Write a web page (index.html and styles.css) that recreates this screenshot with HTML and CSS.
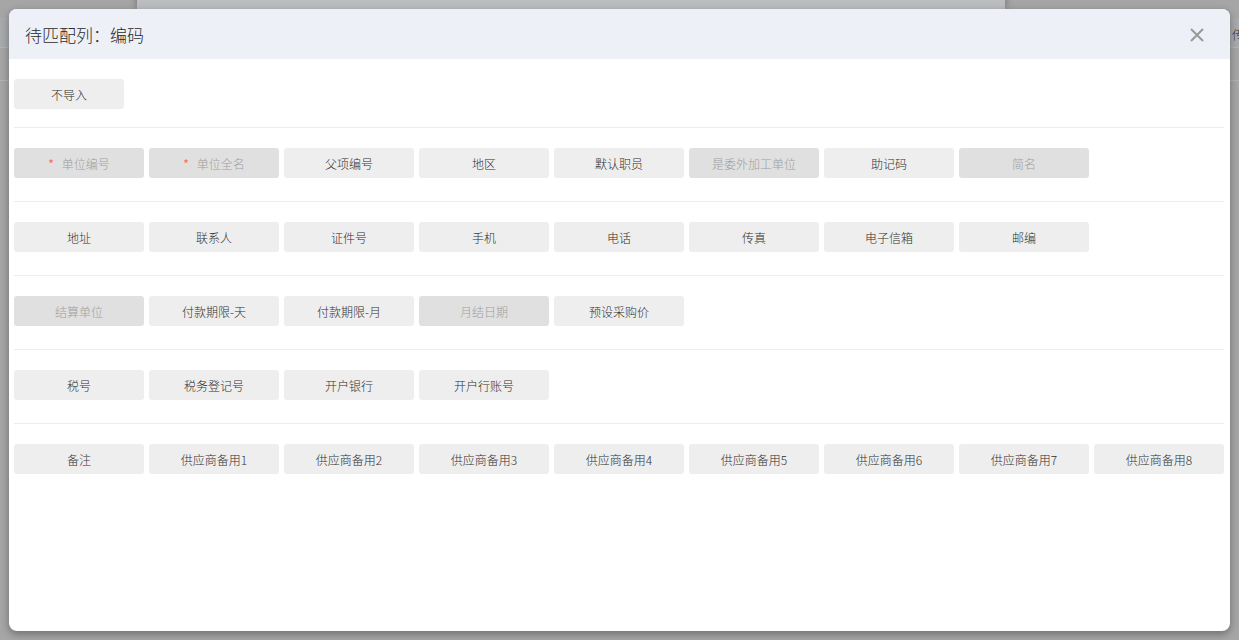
FILE: index.html
```html
<!DOCTYPE html>
<html lang="zh-CN">
<head>
<meta charset="utf-8">
<title>待匹配列：编码</title>
<link rel="stylesheet" href="styles.css">
</head>
<body>
<div class="backdrop">
  <div class="bd-panel"></div>
  <div class="bd-band"></div>
  <div class="bd-line bd-line-1"></div>
  <div class="bd-line bd-line-2"></div>
  <span class="bd-text">传</span>
</div>
<div class="modal">
  <div class="modal-header">
    <span class="modal-title">待匹配列：编码</span>
    <span class="modal-close">
      <svg width="14" height="14" viewBox="0 0 14 14"><path d="M1 1L13 13M13 1L1 13" stroke="#999" stroke-width="2" fill="none"/></svg>
    </span>
  </div>
  <div class="modal-body">
    <div class="group group-first">
      <span class="btn btn-small">不导入</span>
    </div>
    <div class="group">
      <span class="btn btn-disabled"><i class="req">*</i>单位编号</span>
      <span class="btn btn-disabled"><i class="req">*</i>单位全名</span>
      <span class="btn">父项编号</span>
      <span class="btn">地区</span>
      <span class="btn">默认职员</span>
      <span class="btn btn-disabled">是委外加工单位</span>
      <span class="btn">助记码</span>
      <span class="btn btn-disabled">简名</span>
    </div>
    <div class="group">
      <span class="btn">地址</span>
      <span class="btn">联系人</span>
      <span class="btn">证件号</span>
      <span class="btn">手机</span>
      <span class="btn">电话</span>
      <span class="btn">传真</span>
      <span class="btn">电子信箱</span>
      <span class="btn">邮编</span>
    </div>
    <div class="group">
      <span class="btn btn-disabled">结算单位</span>
      <span class="btn">付款期限-天</span>
      <span class="btn">付款期限-月</span>
      <span class="btn btn-disabled">月结日期</span>
      <span class="btn">预设采购价</span>
    </div>
    <div class="group">
      <span class="btn">税号</span>
      <span class="btn">税务登记号</span>
      <span class="btn">开户银行</span>
      <span class="btn">开户行账号</span>
    </div>
    <div class="group group-last">
      <span class="btn">备注</span>
      <span class="btn">供应商备用1</span>
      <span class="btn">供应商备用2</span>
      <span class="btn">供应商备用3</span>
      <span class="btn">供应商备用4</span>
      <span class="btn">供应商备用5</span>
      <span class="btn">供应商备用6</span>
      <span class="btn">供应商备用7</span>
      <span class="btn">供应商备用8</span>
    </div>
  </div>
</div>
</body>
</html>
```

FILE: styles.css
```css
html, body {
  margin: 0;
  padding: 0;
}
body {
  width: 1239px;
  height: 640px;
  overflow: hidden;
  background: #a6a6a6;
  font-family: "Noto Sans CJK SC", "Noto Sans", sans-serif;
  position: relative;
}
.backdrop {
  position: absolute;
  inset: 0;
  z-index: 0;
}
.bd-panel {
  position: absolute;
  left: 137px;
  top: -20px;
  width: 868px;
  height: 29px;
  background: #bcbdc1;
  box-shadow: 0 0 8px rgba(0,0,0,0.35);
}
.bd-band {
  position: absolute;
  left: 0;
  right: 0;
  top: 18px;
  height: 30px;
  background: #a9aaad;
}
.bd-line {
  position: absolute;
  left: 0;
  right: 0;
  height: 1px;
  background: #b4b4b4;
}
.bd-line-1 { top: 47px; }
.bd-line-2 { top: 80px; }
.bd-text {
  position: absolute;
  left: 1232px;
  top: 26px;
  font-size: 12px;
  font-weight: 300;
  color: #333;
}
.modal {
  position: relative;
  z-index: 1;
  margin: 9px 0 0 9px;
  width: 1221px;
  height: 622px;
  background: #fff;
  border-radius: 8px;
  overflow: hidden;
  box-shadow: 0 3px 8px rgba(0,0,0,0.35);
  display: flex;
  flex-direction: column;
}
.modal-header {
  height: 50px;
  flex: none;
  background: #edf0f7;
  display: flex;
  align-items: center;
  justify-content: space-between;
  padding: 0 26px 0 16px;
}
.modal-title {
  font-size: 17px;
  font-weight: 300;
  color: #2b2b2b;
  line-height: 1;
}
.modal-close {
  display: flex;
  width: 14px;
  height: 14px;
  margin-top: 2px;
}
.modal-body {
  padding: 0 6px 0 5px;
}
.group {
  display: flex;
  gap: 5px;
  padding: 20px 0 23px;
  border-bottom: 1px solid #ececec;
}
.group-first {
  padding-bottom: 18px;
}
.group-last {
  border-bottom: none;
}
.btn {
  width: 130px;
  height: 30px;
  flex: none;
  display: flex;
  align-items: center;
  justify-content: center;
  background: #eeeeee;
  border-radius: 3px;
  font-size: 12px;
  font-weight: 300;
  color: #2e2e2e;
}
.btn-small {
  width: 110px;
}
.btn-disabled {
  background: #e0e0e0;
  color: #9e9e9e;
}
.req {
  font-style: normal;
  font-weight: 400;
  color: #f56c57;
  margin-right: 8px;
}
```
